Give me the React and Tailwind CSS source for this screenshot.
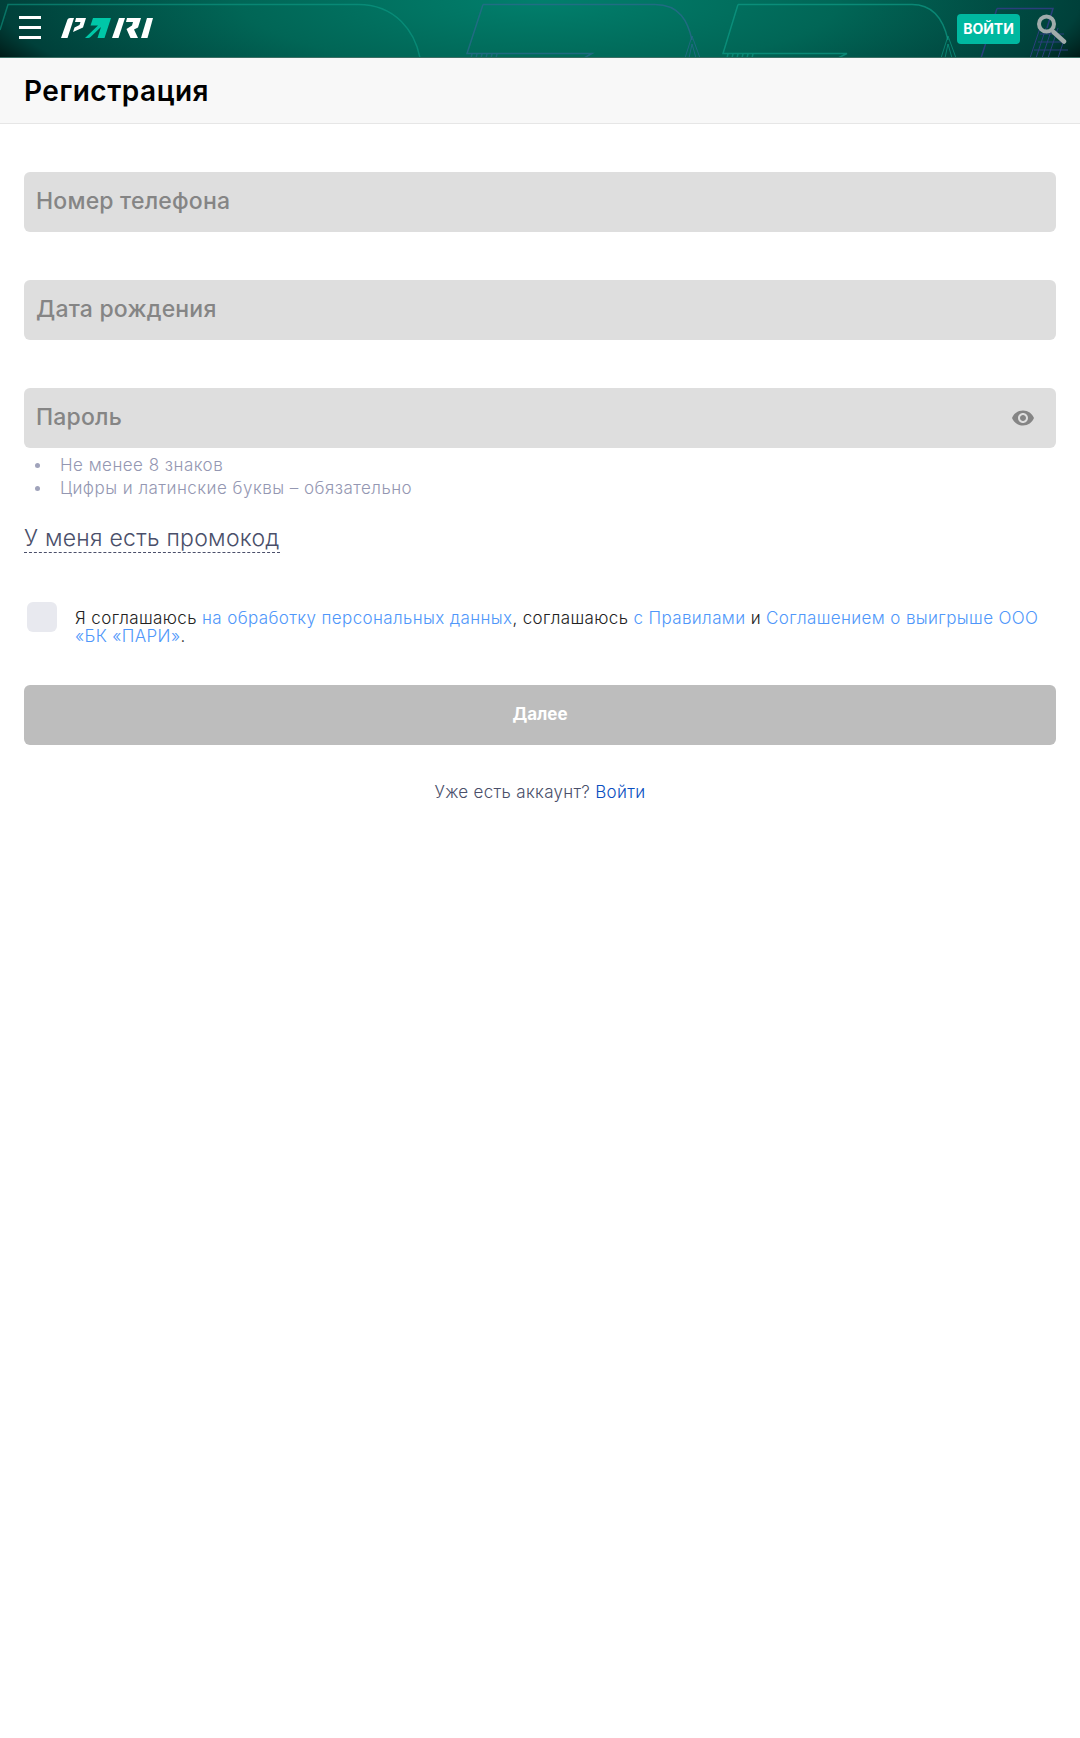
const font = "font-['Inter',sans-serif]";

function Mesh({ x, y, w, h, color }) {
    // little hatch marks hanging off the line art
    const lines = [];
    for (let i = 0; i <= w; i += 5) {
        lines.push(<path key={i} d={`M${x + i} ${y} L${x + i - 1} ${y + h}`} stroke={color} strokeOpacity="0.6" />);
    }
    return <g>{lines}</g>;
}

function HeaderArt() {
    const teal = "#0fa08a";
    const blue = "#2b6a8e";
    const navy = "#2a3f7c";
    return (
        <svg className="absolute inset-0 h-[58px] w-[1080px]" viewBox="0 0 1080 58" fill="none" strokeWidth="1.500">
            <path d="M0 30 L8 4.500 H358 C396 4.500 415 32 420 58" stroke={teal} strokeOpacity="0.55" />

            <path d="M483 4.500 H655 C680 4.500 688 22 692 40 M483 4.500 L467 53.500 H592 L584 58" stroke={blue} strokeOpacity="0.75" />
            <path d="M692 36 L685 58 M692 36 L700 58 M692 44 L689 58 M692 44 L696 58" stroke={blue} strokeOpacity="0.75" strokeWidth="1" />
            <Mesh x={472} y={54} w={28} h={4} color={blue} />

            <path d="M738 4.500 H912 C935 4.500 944 22 948 40 M738 4.500 L723 53.500 H847 L838 58" stroke={teal} strokeOpacity="0.65" />
            <path d="M948 36 L941 58 M948 36 L956 58 M948 44 L945 58 M948 44 L952 58" stroke={teal} strokeOpacity="0.65" strokeWidth="1" />
            <Mesh x={728} y={54} w={28} h={4} color={teal} />

            <path d="M997 8.500 H1053 L1047 28 M997 8.500 L981 58" stroke={navy} />
            <path d="M1040 28 L1030 58 M1046 28 L1036 58 M1052 28 L1042 58 M1058 28 L1048 58 M1064 40 L1058 58 M1040 34 H1064 M1038 42 H1066 M1034 50 H1068" stroke={navy} strokeWidth="1" />
        </svg>
    );
}

function Logo() {
    return (
        <svg width="92" height="20" viewBox="0 0 92 20" className="shrink-0">
            <path fill="#fff" d="M6.500 1.500 Q7 0 9 0 H13 L6.500 20 H0 Z" />
            <path fill="#fff" d="M15 0 H25 L22 9.500 L12 14 L13.500 9.500 L18.500 7 L19.500 4 H14 Z" />
            <path fill="#00c7a8" d="M32 0 H50 L43.500 20 H36.500 L40 9 L29.500 19 Q28.500 20 27 20 H24 L37 7.500 H29.500 Z" />
            <path fill="#fff" d="M58 0 H64 L57.500 20 H51 Z" />
            <path fill="#fff" d="M66 0 H80 L77 9.500 L73 11.500 L77 20 H69.500 L65.500 11 L71 7.500 L72 4 H65 Z" />
            <path fill="#fff" d="M86 0 H92 L86.500 20 H80 Z" />
        </svg>
    );
}

function Field({ label, children }) {
    return (
        <div className="flex h-[60px] items-center justify-between rounded-md bg-[#dedede] pl-3 pr-[21px]">
            <span className="-mt-[2px] text-[23px] font-medium tracking-[0.2px] text-[#858585]">{label}</span>
            {children}
        </div>
    );
}

function Hint({ children }) {
    return (
        <li className="flex items-center">
            <span className="ml-[11px] mr-[20px] h-[5px] w-[5px] rounded-full bg-[#a0a3bb]" />
            {children}
        </li>
    );
}

export default function App() {
    return (
        <div className={`min-h-[1738px] bg-white ${font}`}>
            <header className="relative flex h-[58px] items-center overflow-hidden border-b border-[#3c6f65] bg-[radial-gradient(ellipse_600px_140px_at_50%_0%,#017f6c_0%,#016656_50%,#00403a_90%,#001512_100%)] pl-[19px] pr-[13px]">
                <HeaderArt />
                <div className="relative mb-[2px] flex w-[22px] flex-col gap-[7px]">
                    <span className="h-[3px] bg-white" />
                    <span className="h-[3px] bg-white" />
                    <span className="h-[3px] bg-white" />
                </div>
                <div className="relative mb-[1px] ml-5">
                    <Logo />
                </div>
                <div className="relative ml-auto flex items-center gap-[17px]">
                    <button className="flex h-[30px] w-[63px] items-center justify-center rounded bg-[#00b8a0] text-[14px] font-bold text-white">
                        ВОЙТИ
                    </button>
                    <svg width="30" height="30" viewBox="0 0 30 30" fill="none" stroke="#a0acab">
                        <circle cx="9.500" cy="10" r="7.500" strokeWidth="4" />
                        <path d="M16.500 18 L27 27.500" strokeWidth="4.500" strokeLinecap="round" />
                    </svg>
                </div>
            </header>

            <div className="flex h-[66px] items-center border-b border-[#e6e6e6] bg-[#f8f8f8] px-6">
                <h1 className="text-[28px] font-semibold tracking-[0.5px] text-black">Регистрация</h1>
            </div>

            <main className="px-6 pt-12">
                <div className="flex flex-col gap-12">
                    <Field label="Номер телефона" />
                    <Field label="Дата рождения" />
                    <div>
                        <Field label="Пароль">
                            <svg width="24" height="24" viewBox="0 0 24 24" fill="#858585">
                                <path d="M12 4.500C7 4.500 2.730 7.610 1 12c1.730 4.390 6 7.500 11 7.500s9.270-3.110 11-7.500c-1.730-4.390-6-7.500-11-7.500zM12 17c-2.760 0-5-2.240-5-5s2.240-5 5-5 5 2.240 5 5-2.240 5-5 5zm0-8c-1.660 0-3 1.340-3 3s1.340 3 3 3 3-1.340 3-3-1.340-3-3-3z" />
                            </svg>
                        </Field>
                        <ul className="mt-[6px] text-[17px] leading-[23px] font-light tracking-[0.47px] text-[#9497b2]">
                            <Hint>Не менее 8 знаков</Hint>
                            <Hint>Цифры и латинские буквы – обязательно</Hint>
                        </ul>
                    </div>
                </div>

                <div className="mt-6">
                    <span className="inline-block border-b border-dashed border-[#4a4f6a] text-[23px] leading-[28px] font-light tracking-[0.25px] text-[#4a4f6a]">
                        У меня есть промокод
                    </span>
                </div>

                <div className="mt-[49px] flex items-start pl-[3px]">
                    <span className="h-[30px] w-[30px] shrink-0 rounded-md bg-[#e8e9ef]" />
                    <p className="ml-[18px] pt-[7px] text-[17px] leading-[18px] font-light tracking-[0.37px] text-[#222]">
                        Я соглашаюсь <a className="text-[#4f97fa]">на обработку персональных данных</a>, соглашаюсь{" "}
                        <a className="text-[#4f97fa]">с Правилами</a> и{" "}
                        <a className="text-[#4f97fa]">Соглашением о выигрыше ООО «БК «ПАРИ»</a>.
                    </p>
                </div>

                <button className="mt-10 flex h-[60px] w-full items-center justify-center rounded-md bg-[#bdbdbd] text-[17px] font-bold text-white">
                    Далее
                </button>

                <p className="mt-[37px] text-center text-[17px] leading-5 font-light tracking-[0.3px] text-[#4a4f6a]">
                    Уже есть аккаунт? <a className="text-[#0a4fc0]">Войти</a>
                </p>
            </main>
        </div>
    );
}
